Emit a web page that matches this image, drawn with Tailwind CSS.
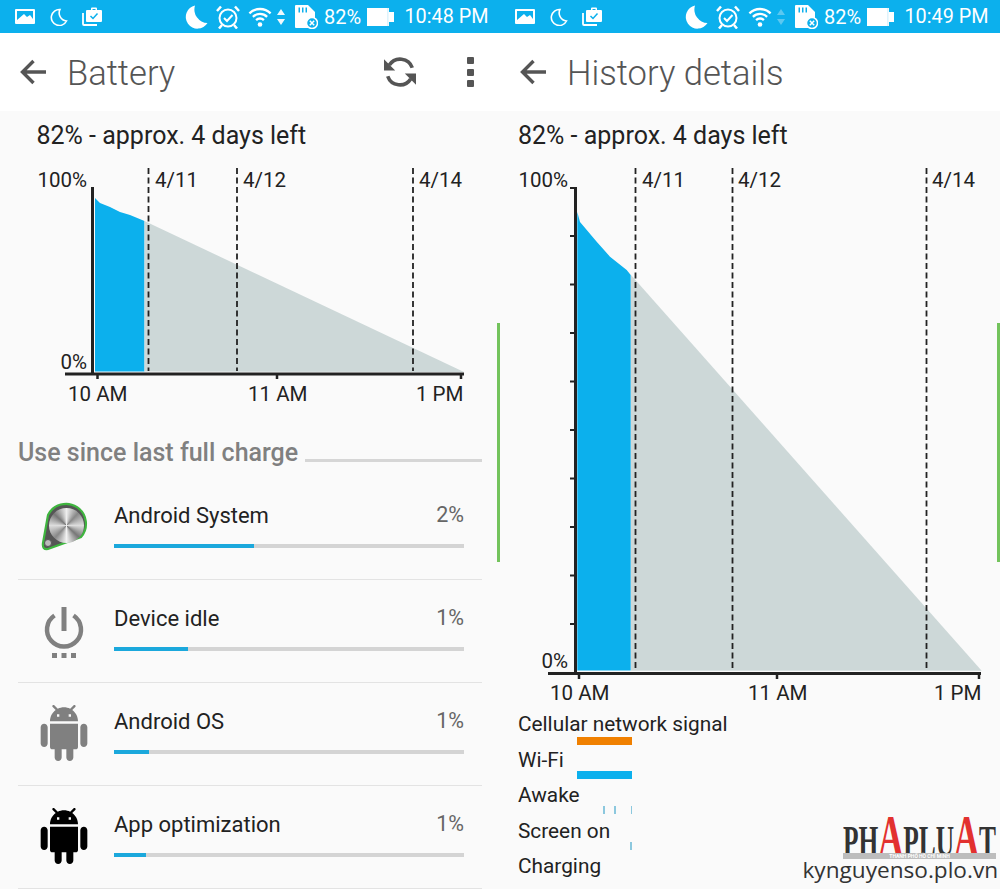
<!DOCTYPE html>
<html>
<head>
<meta charset="utf-8">
<script src="https://cdn.jsdelivr.net/npm/@tailwindcss/browser@4"></script>
</head>
<body class="bg-[#fafafa] font-['Roboto',sans-serif]">
<svg class="absolute w-0 h-0" aria-hidden="true">
  <symbol id="img" viewBox="0 0 20 15"><rect width="20" height="15" rx="1" fill="#fff"/><path d="M2 2h16v8l-3-4-3 2-3-3-7 6z" fill="#0cb0ed"/></symbol>
  <symbol id="moon-s" viewBox="0 0 18 18"><path d="M10 1.500A8 8 0 1 0 16.500 13 8 8 0 0 1 10 1.500z" fill="none" stroke="#fff" stroke-width="1.600"/></symbol>
  <symbol id="bag" viewBox="0 0 20 19"><path d="M1 6v11a1 1 0 0 0 1 1h13" fill="none" stroke="#fff" stroke-width="1.800"/><path d="M5 3h4V1.500a1 1 0 0 1 1-1h4a1 1 0 0 1 1 1V3h4a1 1 0 0 1 1 1v10a1 1 0 0 1-1 1H5a1 1 0 0 1-1-1V4a1 1 0 0 1 1-1z" fill="#fff"/><path d="M10.500 3V2h3v1z" fill="#0cb0ed"/><path d="M8.500 9l2.500 2.500 4.500-5" fill="none" stroke="#0cb0ed" stroke-width="1.500"/></symbol>
  <symbol id="moon-l" viewBox="0 0 24 24"><path d="M11 .5A11.700 11.700 0 1 0 23.500 18 13.500 13.500 0 0 1 11 .5z" fill="#fff"/></symbol>
  <symbol id="alarm" viewBox="0 0 24 24"><circle cx="12" cy="13" r="8.500" fill="none" stroke="#fff" stroke-width="2"/><path d="M8 13l3 3 5.500-6" fill="none" stroke="#fff" stroke-width="2"/><path d="M1 6l4-4.500M23 6l-4-4.500M6 20l-3 3.500M18 20l3 3.500" stroke="#fff" stroke-width="2.500" fill="none"/></symbol>
  <symbol id="wifi" viewBox="0 0 26 20"><g fill="none" stroke="#fff" stroke-width="2.300"><path d="M9.100 13.100A5.500 5.500 0 0 1 16.900 13.100"/><path d="M5.900 9.900A10 10 0 0 1 20.100 9.900"/><path d="M2.400 6.400A15 15 0 0 1 23.600 6.400"/></g><circle cx="13" cy="17.500" r="2.300" fill="#fff"/></symbol>
  <symbol id="sd" viewBox="0 0 23 24"><path d="M1 0h12l7 7v15a1 1 0 0 1-1 1H1a1 1 0 0 1-1-1V1a1 1 0 0 1 1-1z" fill="#fff"/><path d="M3.500 2.500h1.500v5H3.500zM7 2.500h1.500v5H7zM10.500 2.500H12v5h-1.500z" fill="#0cb0ed"/><circle cx="17" cy="18" r="5.500" fill="#0cb0ed" stroke="#fff" stroke-width="1.500"/><path d="M14.800 15.800l4.400 4.400M19.200 15.800l-4.400 4.400" stroke="#fff" stroke-width="1.500"/></symbol>
  <symbol id="batt" viewBox="0 0 27 18"><rect width="22" height="18" fill="#fff"/><rect x="22" y="4" width="5" height="10" fill="#fff"/><rect x="20.500" y="0" width=".8" height="18" fill="#bfe8f8"/></symbol>
  <symbol id="back" viewBox="0 0 26 26"><path d="M26 13H3M13.500 2L2.500 13l11 11" fill="none" stroke="#555" stroke-width="3.400"/></symbol>
  <symbol id="android" viewBox="0 0 24 24"><path d="M6 18c0 .55.45 1 1 1h1v3.500c0 .83.67 1.500 1.500 1.500s1.500-.67 1.500-1.500V19h2v3.500c0 .83.67 1.500 1.500 1.500s1.500-.67 1.500-1.500V19h1c.55 0 1-.45 1-1V8H6v10zM3.500 8C2.670 8 2 8.670 2 9.500v7c0 .83.67 1.500 1.500 1.500S5 17.330 5 16.500v-7C5 8.670 4.330 8 3.500 8zm17 0c-.83 0-1.500.67-1.500 1.500v7c0 .83.67 1.500 1.500 1.500s1.500-.67 1.500-1.500v-7c0-.83-.67-1.500-1.500-1.500zm-4.970-5.840l1.300-1.300c.2-.2.2-.51 0-.71-.2-.2-.51-.2-.71 0l-1.480 1.480C13.850 1.230 12.950 1 12 1c-.96 0-1.860.23-2.660.63L7.850.15c-.2-.2-.51-.2-.71 0-.2.2-.2.51 0 .71l1.310 1.310C6.970 3.260 6 5.010 6 7h12c0-1.990-.97-3.750-2.470-4.840zM10 5H9V4h1v1zm5 0h-1V4h1v1z"/></symbol>
</svg>

<div class="flex w-[1000px] h-[889px] overflow-hidden">

  <!-- LEFT PANE -->
  <div class="relative w-[500px] h-[889px] bg-[#fafafa] overflow-hidden">
    <div class="flex items-center h-[33px] bg-[#0cb0ed] text-white">
      <svg class="ml-[15px] w-[20px] h-[15px] shrink-0"><use href="#img"/></svg>
      <svg class="ml-[15px] w-[18px] h-[18px] shrink-0"><use href="#moon-s"/></svg>
      <svg class="ml-[14px] w-[20px] h-[19px] shrink-0"><use href="#bag"/></svg>
      <svg class="ml-[82px] w-[24px] h-[24px] shrink-0"><use href="#moon-l"/></svg>
      <svg class="ml-[8px] w-[24px] h-[24px] shrink-0"><use href="#alarm"/></svg>
      <svg class="ml-[7px] w-[26px] h-[20px] shrink-0"><use href="#wifi"/></svg>
      <svg class="ml-[4px] w-[8px] h-[16px] shrink-0" viewBox="0 0 8 16"><path d="M4 0l4 6H0zM4 16l4-6H0z" fill="#f0f9fd"/></svg>
      <svg class="ml-[10px] w-[23px] h-[24px] shrink-0"><use href="#sd"/></svg>
      <span class="ml-[6px] w-[37px] text-[20px] whitespace-nowrap">82%</span>
      <svg class="ml-[6px] w-[27px] h-[18px] shrink-0"><use href="#batt"/></svg>
      <span class="ml-[10.500px] text-[19.800px] whitespace-nowrap">10:48 PM</span>
    </div>
    <div class="flex items-center h-[78px] bg-white">
      <svg class="ml-[20px] w-[26px] h-[26px] shrink-0"><use href="#back"/></svg>
      <span class="ml-[21px] pt-[3px] text-[34.600px] font-light text-[#555]">Battery</span>
      <svg class="ml-auto w-[32px] h-[32px] shrink-0" viewBox="0 0 30 30">
        <path d="M26.500 11A12 12 0 0 0 5 8.500M3.500 19A12 12 0 0 0 25 21.500" fill="none" stroke="#555" stroke-width="3.400"/>
        <path d="M0 3v10.500h10.500zM30 27V16.500H19.500z" fill="#555"/>
      </svg>
      <div class="ml-[51px] mr-[26px] flex flex-col gap-[4.500px]">
        <span class="block w-[7px] h-[7px] rounded-[1px] bg-[#555]"></span>
        <span class="block w-[7px] h-[7px] rounded-[1px] bg-[#555]"></span>
        <span class="block w-[7px] h-[7px] rounded-[1px] bg-[#555]"></span>
      </div>
    </div>
    <div class="h-[49px] pl-[36.500px] pt-[10px] text-[25px] leading-[30px] text-[#222]">82% - approx. 4 days left</div>

    <svg class="block w-[500px] h-[250px] text-[20.500px] fill-[#222]" viewBox="0 160 500 250">
      <path d="M95 198L100 203 110 207 120 212 130 215 144.500 221V371.500H95z" fill="#0cb0ed"/>
      <path d="M144.500 221L464 372 144.500 371.500z" fill="#cdd8d8"/>
      <g stroke="#222" stroke-width="1.800" stroke-dasharray="6 3.500" fill="none">
        <path d="M148.500 168V371"/><path d="M237 168V371"/><path d="M413 168V371"/>
      </g>
      <path d="M92.500 187V375M65 374H464" stroke="#222" stroke-width="3" fill="none"/>
      <path d="M97.500 375V379M277 375V379M461 375V379" stroke="#222" stroke-width="2.500" fill="none"/>
      <text x="87" y="187" text-anchor="end">100%</text>
      <text x="87" y="369" text-anchor="end">0%</text>
      <text x="155" y="187">4/11</text>
      <text x="243" y="187">4/12</text>
      <text x="419" y="187">4/14</text>
      <text x="68" y="401">10 AM</text>
      <text x="248" y="401">11 AM</text>
      <text x="416" y="401">1 PM</text>
    </svg>

    <div class="flex items-end h-[67px] pl-[18px] pr-[18px] pb-[9px]">
      <span class="text-[25px] leading-[30px] font-medium text-[#808080] whitespace-nowrap">Use since last full charge</span>
      <span class="flex-1 ml-[7px] mb-[6px] h-[3px] bg-[#d6d6d6]"></span>
    </div>

    <div class="mx-[18px]">
      <div class="flex h-[103px] border-b border-[#e3e3e3]">
        <div class="w-[92px] mr-[4px] flex items-center justify-center">
          <div class="relative w-[50px] h-[50px] -mt-[2px] ml-[3px]">
            <svg class="block w-[50px] h-[50px]" viewBox="0 0 50 50"><path d="M2 41L7 13A20 20 0 1 1 40 35L7 47Q1 48 2 41z" fill="#555" stroke="#3fb53f" stroke-width="2.200"/><circle cx="7" cy="41" r="3.500" fill="#bbb" stroke="#555"/></svg>
            <div class="absolute left-[8px] top-[6px] w-[35px] h-[35px] rounded-full bg-[conic-gradient(#eee,#888_12%,#ddd_25%,#777_37%,#f2f2f2_50%,#888_62%,#ddd_75%,#777_87%,#eee)]"></div>
          </div>
        </div>
        <div class="w-[350px] pt-[24px]">
          <div class="flex justify-between items-center h-[28px] text-[22px]"><span class="text-[#222]">Android System</span><span class="text-[21.500px] text-[#666]">2%</span></div>
          <div class="mt-[15px] h-[4px] bg-[#d4d4d4]"><div class="h-[4px] w-[140px] bg-[#1ba8dc]"></div></div>
        </div>
      </div>
      <div class="flex h-[103px] border-b border-[#e3e3e3]">
        <div class="w-[92px] mr-[4px] flex items-center justify-center">
          <svg class="w-[50px] h-[54px] mt-[1px]" viewBox="0 0 50 54"><path d="M15.500 10.500A17 17 0 1 0 34.500 10.500" fill="none" stroke="#808080" stroke-width="4.500"/><path d="M25 2V26" stroke="#808080" stroke-width="5"/><path d="M13 48h5v5h-5zM22.500 48h5v5h-5zM32 48h5v5h-5z" fill="#808080"/></svg>
        </div>
        <div class="w-[350px] pt-[24px]">
          <div class="flex justify-between items-center h-[28px] text-[22px]"><span class="text-[#222]">Device idle</span><span class="text-[21.500px] text-[#666]">1%</span></div>
          <div class="mt-[15px] h-[4px] bg-[#d4d4d4]"><div class="h-[4px] w-[74px] bg-[#1ba8dc]"></div></div>
        </div>
      </div>
      <div class="flex h-[103px] border-b border-[#e3e3e3]">
        <div class="w-[92px] mr-[4px] flex items-center justify-center">
          <svg class="w-[56px] h-[56px] -mt-[2px] fill-[#808080]"><use href="#android"/></svg>
        </div>
        <div class="w-[350px] pt-[24px]">
          <div class="flex justify-between items-center h-[28px] text-[22px]"><span class="text-[#222]">Android OS</span><span class="text-[21.500px] text-[#666]">1%</span></div>
          <div class="mt-[15px] h-[4px] bg-[#d4d4d4]"><div class="h-[4px] w-[35px] bg-[#1ba8dc]"></div></div>
        </div>
      </div>
      <div class="flex h-[103px] border-b border-[#e3e3e3]">
        <div class="w-[92px] mr-[4px] flex items-center justify-center">
          <svg class="w-[56px] h-[56px] -mt-[2px] fill-black"><use href="#android"/></svg>
        </div>
        <div class="w-[350px] pt-[24px]">
          <div class="flex justify-between items-center h-[28px] text-[22px]"><span class="text-[#222]">App optimization</span><span class="text-[21.500px] text-[#666]">1%</span></div>
          <div class="mt-[15px] h-[4px] bg-[#d4d4d4]"><div class="h-[4px] w-[32px] bg-[#1ba8dc]"></div></div>
        </div>
      </div>
    </div>

    <div class="absolute right-0 top-[323px] w-[3px] h-[239px] bg-[#73c35c]"></div>
  </div>

  <!-- RIGHT PANE -->
  <div class="relative w-[500px] h-[889px] bg-[#fafafa] overflow-hidden">
    <div class="flex items-center h-[33px] bg-[#0cb0ed] text-white">
      <svg class="ml-[15px] w-[20px] h-[15px] shrink-0"><use href="#img"/></svg>
      <svg class="ml-[15px] w-[18px] h-[18px] shrink-0"><use href="#moon-s"/></svg>
      <svg class="ml-[14px] w-[20px] h-[19px] shrink-0"><use href="#bag"/></svg>
      <svg class="ml-[82px] w-[24px] h-[24px] shrink-0"><use href="#moon-l"/></svg>
      <svg class="ml-[8px] w-[24px] h-[24px] shrink-0"><use href="#alarm"/></svg>
      <svg class="ml-[7px] w-[26px] h-[20px] shrink-0"><use href="#wifi"/></svg>
      <svg class="ml-[4px] w-[8px] h-[16px] shrink-0" viewBox="0 0 8 16"><path d="M4 0l4 6H0zM4 16l4-6H0z" fill="#5cc8f0"/></svg>
      <svg class="ml-[10px] w-[23px] h-[24px] shrink-0"><use href="#sd"/></svg>
      <span class="ml-[6px] w-[37px] text-[20px] whitespace-nowrap">82%</span>
      <svg class="ml-[6px] w-[27px] h-[18px] shrink-0"><use href="#batt"/></svg>
      <span class="ml-[10.500px] text-[19.800px] whitespace-nowrap">10:49 PM</span>
    </div>
    <div class="flex items-center h-[78px] bg-white">
      <svg class="ml-[20px] w-[26px] h-[26px] shrink-0"><use href="#back"/></svg>
      <span class="ml-[21px] pt-[3px] text-[34.600px] font-light text-[#555]">History details</span>
    </div>
    <div class="h-[49px] pl-[18px] pt-[10px] text-[25px] leading-[30px] text-[#222]">82% - approx. 4 days left</div>

    <svg class="block w-[500px] h-[550px] text-[20.500px] fill-[#222]" viewBox="0 160 500 550">
      <path d="M77.300 212L80 222 96.700 241.700 110 256.700 126.700 270 130.700 275V670.500H77.300z" fill="#0cb0ed"/>
      <path d="M131 275L481.700 670.700H131z" fill="#cdd8d8"/>
      <g stroke="#222" stroke-width="1.800" stroke-dasharray="6 3.500" fill="none">
        <path d="M135.500 168V671"/><path d="M232.500 168V671"/><path d="M426.500 168V671"/>
      </g>
      <path d="M75.500 187V675M48 673.500H481" stroke="#222" stroke-width="3" fill="none"/>
      <path d="M70 188H75M70 236H75M70 284.500H75M70 333H75M70 381.500H75M70 430H75M70 478.500H75M70 527H75M70 575.500H75M70 624H75" stroke="#222" stroke-width="2" fill="none"/>
      <path d="M79 675V679M277 675V679M479 675V679" stroke="#222" stroke-width="2.500" fill="none"/>
      <text x="68" y="187" text-anchor="end">100%</text>
      <text x="68" y="668" text-anchor="end">0%</text>
      <text x="142" y="187">4/11</text>
      <text x="238" y="187">4/12</text>
      <text x="432" y="187">4/14</text>
      <text x="50" y="700">10 AM</text>
      <text x="248" y="700">11 AM</text>
      <text x="434" y="700">1 PM</text>
    </svg>

    <div class="text-[20.800px] text-[#222]">
      <div class="h-[35.500px]">
        <div class="pl-[18px] h-[27px] leading-[28px]">Cellular network signal</div>
        <div class="ml-[77px] w-[54.500px] h-[8px] bg-[#f08000]"></div>
      </div>
      <div class="h-[35.500px]">
        <div class="pl-[18px] h-[27px] leading-[28px]">Wi-Fi</div>
        <div class="-mt-[1.500px] ml-[77px] w-[54.500px] h-[8px] bg-[#0cb0ed]"></div>
      </div>
      <div class="h-[35.500px]">
        <div class="pl-[18px] h-[27px] leading-[28px]">Awake</div>
        <div class="-mt-[2px] flex h-[8px] ml-[103px]">
          <span class="w-[1.500px] bg-[#8cc8de]"></span>
          <span class="ml-[9.500px] w-[1.500px] bg-[#8cc8de]"></span>
          <span class="ml-[15px] w-[1.500px] bg-[#8cc8de]"></span>
        </div>
      </div>
      <div class="h-[35.500px]">
        <div class="pl-[18px] h-[27px] leading-[28px]">Screen on</div>
        <div class="-mt-[1.500px] ml-[130px] w-[1.500px] h-[8px] bg-[#8cc8de]"></div>
      </div>
      <div class="h-[35.500px]">
        <div class="pl-[18px] h-[27px] leading-[28px]">Charging</div>
      </div>
    </div>

    <div class="absolute right-0 top-[323px] w-[3px] h-[239px] bg-[#73c35c]"></div>

    <!-- watermark -->
    <div class="absolute left-[343px] top-[806px] h-[50px] origin-left scale-x-[0.577] font-['Liberation_Serif',serif] font-bold text-[44px] leading-[50px] text-[#333] whitespace-nowrap">PH<span class="text-[#e2312f] text-[60px] leading-none">A</span>PLU<span class="text-[#e2312f] text-[60px] leading-none">A</span>T</div>
    <div class="absolute left-[343px] top-[853px] w-[153px] h-[6px] bg-[#bdbdbd] text-white text-[5px] leading-[6px] text-center font-bold whitespace-nowrap">THANH PHỐ HỒ CHÍ MINH</div>
    <div class="absolute left-[302.500px] top-[854px] w-[195px] font-['Open_Sans',sans-serif] text-[22.600px] leading-[32px] text-[#333] whitespace-nowrap">kynguyenso.plo.vn</div>
  </div>

</div>
</body>
</html>
